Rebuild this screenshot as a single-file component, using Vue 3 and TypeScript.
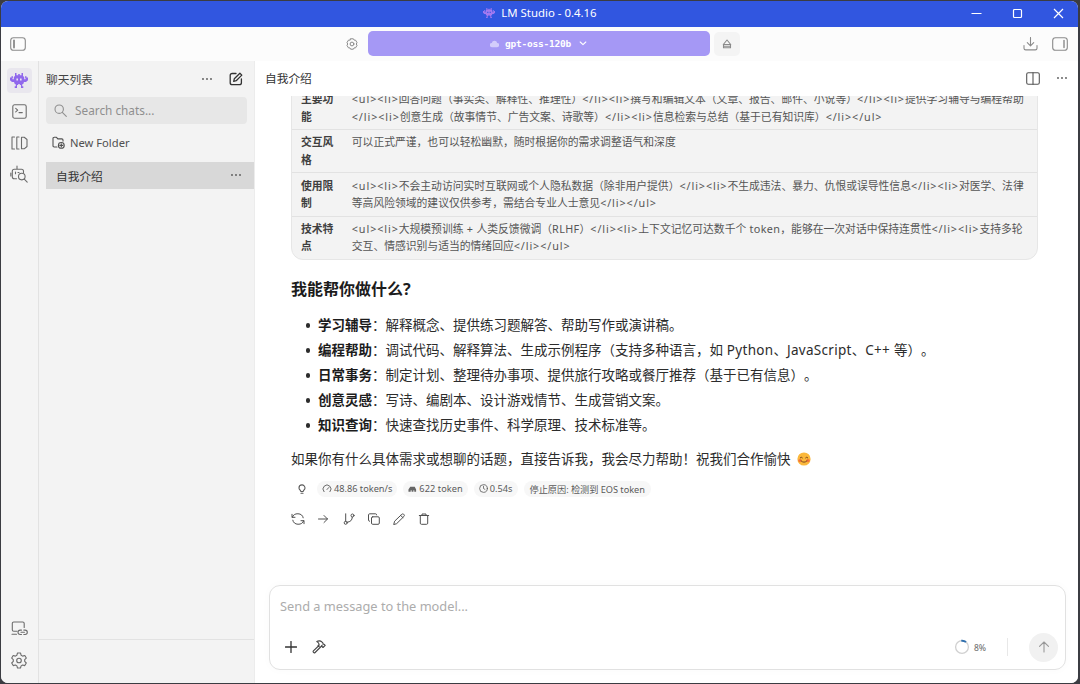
<script setup lang="ts">
interface Part { text: string; kind: string }
interface TableRow { head: string; lines: string[] }

const rows: TableRow[] = [
  {
    head: '主要功能',
    lines: [
      '<ul><li>回答问题（事实类、解释性、推理性）</li><li>撰写和编辑文本（文章、报告、邮件、小说等）</li><li>提供学习辅导与编程帮助',
      '</li><li>创意生成（故事情节、广告文案、诗歌等）</li><li>信息检索与总结（基于已有知识库）</li></ul>',
    ],
  },
  { head: '交互风格', lines: ['可以正式严谨，也可以轻松幽默，随时根据你的需求调整语气和深度'] },
  {
    head: '使用限制',
    lines: [
      '<ul><li>不会主动访问实时互联网或个人隐私数据（除非用户提供）</li><li>不生成违法、暴力、仇恨或误导性信息</li><li>对医学、法律',
      '等高风险领域的建议仅供参考，需结合专业人士意见</li></ul>',
    ],
  },
  {
    head: '技术特点',
    lines: [
      '<ul><li>大规模预训练 + 人类反馈微调（RLHF）</li><li>上下文记忆可达数千个 token，能够在一次对话中保持连贯性</li><li>支持多轮',
      '交互、情感识别与适当的情绪回应</li></ul>',
    ],
  },
]

const helps = [
  { title: '学习辅导', body: '解释概念、提供练习题解答、帮助写作或演讲稿。' },
  { title: '编程帮助', body: '调试代码、解释算法、生成示例程序（支持多种语言，如 Python、JavaScript、C++ 等）。' },
  { title: '日常事务', body: '制定计划、整理待办事项、提供旅行攻略或餐厅推荐（基于已有信息）。' },
  { title: '创意灵感', body: '写诗、编剧本、设计游戏情节、生成营销文案。' },
  { title: '知识查询', body: '快速查找历史事件、科学原理、技术标准等。' },
]

// Splits mixed text so that tags and Latin words can carry their own tracking.
function split(text: string): Part[] {
  return (text.match(/[\x20-\x7e]+|[^\x20-\x7e]+/g) ?? []).map((t) => ({
    text: t,
    kind: t.startsWith('<') ? 'tag' : /^[\x20-\x7e]/.test(t) ? 'latin' : 'han',
  }))
}
</script>

<template>
  <div class="window">
    <svg class="defs" width="0" height="0">
      <symbol id="invader" viewBox="0 0 18 15">
        <path fill="currentColor" fill-rule="evenodd" d="M5 0h1.500v2.200h1.700V1h1.600v1.200h1.700V0H13v2.800l1.200 1.500v1.900h1.300V4.800H15V3.300h1.500v1.200H18v2.700L16 9h-2.200v1.200l-1.600 1.300v1.700h1.100V15H11v-3h-1.200v-1H8.200v1H7v3H4.700v-1.800h1.100v-1.700l-1.600-1.300V9H2L0 7.200V4.500h1.500V3.300H3v1.500h-.5v1.400h1.300V4.300L5 2.800zM6.400 5.500v2H8v-2zm3.600 0v2h1.600v-2z" />
      </symbol>
    </svg>

    <header class="titlebar">
      <div class="title">
        <svg class="title-logo"><use href="#invader" /></svg>
        <span>LM Studio - 0.4.16</span>
      </div>
      <div class="win-controls">
        <svg width="11" height="11" viewBox="0 0 11 11"><path d="M.5 5.500h10" /></svg>
        <svg width="11" height="11" viewBox="0 0 11 11"><rect x="1.500" y="1.500" width="8" height="8" rx="1" /></svg>
        <svg width="11" height="11" viewBox="0 0 11 11"><path d="M1 1l9 9M10 1l-9 9" /></svg>
      </div>
    </header>

    <div class="toolbar">
      <svg class="i tb-left" viewBox="0 0 16 14"><rect x=".7" y=".7" width="14.600" height="12.600" rx="2.800" /><path d="M4 3.500v7" stroke-width="1.800" /></svg>
      <div class="model-group">
        <svg class="i gear" viewBox="0 0 12 12"><path d="M4.600.8h2.800l.7 1.300 1.500.1 1.400 2.400L10.300 6l.7 1.400-1.400 2.400-1.500.1-.7 1.300H4.600l-.7-1.300-1.500-.1L1 7.400 1.700 6 1 4.600l1.400-2.400 1.500-.1z" /><circle cx="6" cy="6" r="1.900" /></svg>
        <div class="model">
          <svg class="model-icon" viewBox="0 0 10 8"><path d="M5 .5a3 3 0 0 1 3 2.300A2.300 2.300 0 0 1 8 7.500H2a2.300 2.300 0 0 1 0-4.700A3 3 0 0 1 5 .5z" /></svg>
          <span>gpt-oss-120b</span>
          <svg class="i chev" viewBox="0 0 8 5"><path d="M1.200 1 4 3.700 6.800 1" /></svg>
        </div>
        <div class="eject"><svg class="i" width="10" height="10" viewBox="0 0 10 10"><path d="M5 1 8.700 5.500H1.300zM1.500 5.500v3.300h7V5.500M1.500 7.200h7" /></svg></div>
      </div>
      <div class="tb-right">
        <svg class="i" width="15" height="14" viewBox="0 0 15 14"><path d="M7.500.5v8M4.300 5.600l3.200 3.200 3.200-3.200M1 8.500v2.700c0 1 .7 1.700 1.700 1.700h9.600c1 0 1.700-.7 1.700-1.700V8.500" /></svg>
        <svg class="i" width="16" height="14" viewBox="0 0 16 14"><rect x=".7" y=".7" width="14.600" height="12.600" rx="2.800" /><path d="M12 3.500v7" stroke-width="1.400" /></svg>
      </div>
    </div>

    <div class="body">
      <nav class="rail">
        <div class="rail-btn active"><svg class="rail-logo"><use href="#invader" /></svg></div>
        <div class="rail-btn"><svg class="i" width="15" height="15" viewBox="0 0 15 15"><rect x=".8" y=".8" width="13.400" height="13.400" rx="1.800" /><path d="m3.700 4.300 2 1.800-2 1.800M7 8.600h3.300" /></svg></div>
        <div class="rail-btn"><svg class="i" width="17" height="14" viewBox="0 0 17 14"><path d="M3.500 1H1v12h2.500M8 1H5.800v12H8M10.500 1.200h2.700L16 3.500v7l-2.800 2.300h-2.700z" /></svg></div>
        <div class="rail-btn"><svg class="i" width="18" height="18" viewBox="0 0 18 18"><path d="M7 1v3M13.500 7.500V6.200c0-1.200-.8-2-2-2H4.300c-1.200 0-2 .8-2 2v5.600c0 1.200.8 2 2 2h2.200M.8 8v3M5.500 7v1.800M8 7.500h1" /><circle cx="11.800" cy="11.600" r="3.300" /><path d="m14.300 14.200 2.900 2.900" /></svg></div>
        <div class="rail-bottom">
          <div class="rail-btn"><svg class="i" width="17" height="15" viewBox="0 0 17 15"><path d="M6 10.300H2.800c-.9 0-1.500-.6-1.500-1.500V2.500C1.300 1.600 1.900 1 2.800 1h8.900c.9 0 1.500.6 1.500 1.500v4M1 13.300h4.500" /><path d="M10.500 13.500H9.200a2.200 2.200 0 0 1 0-4.400h1.300M12.800 9.100h1.300a2.200 2.200 0 0 1 0 4.400h-1.300M10 11.300h3.400" /></svg></div>
          <div class="rail-btn"><svg class="i" width="16" height="17" viewBox="0 0 16 17"><path d="M6.500 1h3l.6 2.200 1.500.9 2.200-.6 1.500 2.600-1.600 1.600v1.700l1.600 1.600-1.500 2.600-2.200-.6-1.500.9-.6 2.100h-3l-.6-2.100-1.500-.9-2.200.6L.7 11l1.600-1.600V7.700L.7 6.100l1.500-2.600 2.200.6 1.500-.9z" /><circle cx="8" cy="8.500" r="2.300" /></svg></div>
        </div>
      </nav>

      <aside class="sidebar">
        <div class="side-head">
          <span class="side-title">聊天列表</span>
          <svg class="dots" viewBox="0 0 10 2"><circle cx="1" cy="1" r=".9" /><circle cx="5" cy="1" r=".9" /><circle cx="9" cy="1" r=".9" /></svg>
          <svg class="i compose" viewBox="0 0 14 14"><path d="M7 1.500H3.200C2 1.500 1.200 2.300 1.200 3.500v7.200c0 1.200.8 2 2 2h7.200c1.200 0 2-.8 2-2V7" /><path d="M5.300 6.800 10.900 1.200l1.900 1.900-5.600 5.600-2.500.6z" /></svg>
        </div>
        <div class="search">
          <svg class="i" width="13" height="13" viewBox="0 0 13 13"><circle cx="5.200" cy="5.200" r="4.200" /><path d="m8.300 8.300 4 4" /></svg>
          <span>Search chats...</span>
        </div>
        <div class="folder">
          <svg class="i" width="13" height="13" viewBox="0 0 13 13"><path d="M5 11H2.200c-.7 0-1.200-.5-1.200-1.200V2.500c0-.7.500-1.200 1.200-1.200h2.300l1.300 1.600h4c.7 0 1.200.5 1.200 1.200v1" /><circle cx="9.300" cy="9.400" r="2.900" /><path d="M9.300 7.900v3M7.800 9.400h3" /></svg>
          <span>New Folder</span>
        </div>
        <div class="chat-item">
          <span>自我介绍</span>
          <svg class="dots" viewBox="0 0 10 2"><circle cx="1" cy="1" r=".9" /><circle cx="5" cy="1" r=".9" /><circle cx="9" cy="1" r=".9" /></svg>
        </div>
        <div class="side-foot"></div>
      </aside>

      <main class="main">
        <div class="chat-head">
          <span class="chat-title">自我介绍</span>
          <svg class="i split" viewBox="0 0 14 13"><rect x=".7" y=".7" width="12.600" height="11.600" rx="1.600" /><path d="M7 .7v11.600" /></svg>
          <svg class="dots" viewBox="0 0 10 2"><circle cx="1" cy="1" r=".9" /><circle cx="5" cy="1" r=".9" /><circle cx="9" cy="1" r=".9" /></svg>
        </div>

        <section class="scroll">
          <div class="table">
            <div v-for="row in rows" :key="row.head" class="tr">
              <div class="th">{{ row.head }}</div>
              <div class="td">
                <div v-for="line in row.lines" :key="line" class="line"><span v-for="(p, i) in split(line)" :key="i" :class="p.kind">{{ p.text }}</span></div>
              </div>
            </div>
          </div>

          <h3 class="heading">我能帮你做什么?</h3>
          <ul class="helps">
            <li v-for="h in helps" :key="h.title"><strong>{{ h.title }}</strong><span v-for="(p, i) in split('：' + h.body)" :key="i" :class="p.kind">{{ p.text }}</span></li>
          </ul>
          <p class="closing"><span>如果你有什么具体需求或想聊的话题，直接告诉我，我会尽力帮助！祝我们合作愉快</span>
            <svg class="smile" viewBox="0 0 14 14"><circle cx="7" cy="7" r="6.600" fill="#fbb83c" /><circle cx="3" cy="8.600" r="1.700" fill="#f5743c" /><circle cx="11" cy="8.600" r="1.700" fill="#f5743c" /><path d="M3.200 5.800q1.100-1.400 2.200 0M8.600 5.800q1.100-1.400 2.200 0M4 8.800q3 3 6 0" fill="none" stroke="#6b3a1a" stroke-width=".9" stroke-linecap="round" /></svg>
          </p>

          <div class="stats">
            <svg class="i bulb" viewBox="0 0 8 10"><path d="M2.800 7.500C2.600 6 1 5.700 1 3.900a3 3 0 0 1 6 0c0 1.800-1.600 2.100-1.800 3.600zM3 9.200h2" /></svg>
            <span class="chip s1"><svg class="i" width="10" height="9" viewBox="0 0 10 9"><path d="M2 7.700a4 4 0 1 1 6 0M5 5.500l1.800-2" /></svg>48.86 token/s</span>
            <span class="chip s2"><svg class="solid" width="9" height="8" viewBox="0 0 10 8"><path d="M2.500 1.500h5L9 4.500V7H7V5.500H6V7H4V5.500H3V7H.5V4.500z" /></svg>622 token</span>
            <span class="chip s3"><svg class="i" width="9" height="9" viewBox="0 0 10 10"><circle cx="5" cy="5" r="4.300" /><path d="M5 2.500V5l1.600 1" /></svg>0.54s</span>
            <span class="chip s4">停止原因: 检测到 EOS token</span>
          </div>

          <div class="actions">
            <svg class="i" viewBox="0 0 14 12"><path d="M1 1.300v3h3M1.300 4.300A5.600 4.900 0 0 1 12.200 4.800M13 10.700v-3h-3M12.700 7.700A5.600 4.900 0 0 1 1.800 7.200" /></svg>
            <svg class="i" viewBox="0 0 14 12"><path d="M2.500 6h9M8 2.500 11.500 6 8 9.500" /></svg>
            <svg class="i" viewBox="0 0 14 12"><path d="M3.700.8v7.500M10.300 4.200c0 3-2 4.800-5 5" /><circle cx="3.700" cy="9.800" r="1.500" /><circle cx="10.500" cy="2.500" r="1.500" /></svg>
            <svg class="i" viewBox="0 0 14 12"><rect x="4.500" y="3.800" width="7.800" height="7.500" rx="1.200" /><path d="M2.600 8.300c-.6 0-1.100-.5-1.100-1.100V1.900C1.500 1.300 2 .8 2.600.8h6c.6 0 1.100.5 1.100 1.100" /></svg>
            <svg class="i" viewBox="0 0 14 12"><path d="m1.800 11.200.8-3L9.800 1.300c1.300-1.200 3.500.8 2.200 2.100L4.900 10.400zM8.700 2.500l2.200 2.100" /></svg>
            <svg class="i" viewBox="0 0 14 12"><path d="M2.300 2.500h9.400M5 2.300V1h4v1.300M3.300 2.500v7.700c0 .7.400 1.100 1.100 1.100h5.200c.7 0 1.100-.4 1.100-1.100V2.500" /></svg>
          </div>
        </section>

        <div class="composer">
          <div class="placeholder">Send a message to the model...</div>
          <div class="tools">
            <svg class="i plus" viewBox="0 0 12 12"><path d="M6 .5v11M.5 6h11" /></svg>
            <svg class="i hammer" viewBox="0 0 14 14"><path d="m7 5.500-5.600 5.300c-1 1 .7 2.700 1.700 1.700L8.600 7M4.800 1.500c2-1 4-.6 5.300.7l.9.900v1.200h1.200l1 1-2.200 2.200-1-1V5.400L8 7.600 6 5.600l1.200-1.300C6.800 3 6 2.200 4.800 1.500z" /></svg>
            <svg class="ring" viewBox="0 0 16 16"><circle cx="8" cy="8" r="6.400" stroke="#d0d0d0" /><path d="M7.300 1.700A6.400 6.400 0 0 1 12 3" stroke="#2f6fae" stroke-width="2" /></svg>
            <span class="pct">8%</span>
            <span class="sep"></span>
            <div class="send"><svg class="i" width="12" height="12" viewBox="0 0 12 12"><path d="M6 11V1M1.500 5.300 6 1l4.500 4.300" /></svg></div>
          </div>
        </div>
      </main>
    </div>
  </div>
</template>

<style>
body { background: #3b3c42; overflow: hidden; }
</style>

<style scoped>
.window {
  box-sizing: border-box;
  width: 1077px;
  height: 682px;
  margin: 1px 0 0 1px;
  border-radius: 7px;
  overflow: hidden;
  background: #fff;
  display: flex;
  flex-direction: column;
  font-family: "Noto Sans", "Noto Sans CJK SC", sans-serif;
  color: #3c3c3c;
  text-spacing-trim: space-all;
  white-space: nowrap;
}
.defs { position: absolute; }
svg { flex: none; display: block; }
.i { fill: none; stroke: currentColor; stroke-width: 1.1; stroke-linecap: round; stroke-linejoin: round; }
.dots { width: 10px; height: 2px; fill: #555; }
.tag { letter-spacing: .9px; }
.latin { letter-spacing: .38px; }
.helps .latin { letter-spacing: .3px; }

.titlebar { height: 26px; flex: none; background: #3156e0; display: grid; grid-template-columns: 1fr auto 1fr; align-items: center; color: #fff; }
.title { grid-column: 2; display: flex; align-items: center; gap: 6px; font-size: 11.4px; line-height: 24px; height: 24px; margin: -2px 0 0 1px; }
.title-logo { width: 12px; height: 10px; color: #a47af0; }
.win-controls { display: flex; justify-content: flex-end; gap: 30px; padding: 0 14px 1px 0; }
.win-controls svg { fill: none; stroke: #fff; stroke-width: 1.2; }

.toolbar { height: 34px; flex: none; background: #fcfcfc; display: grid; grid-template-columns: 1fr auto 1fr; align-items: center; color: #8a8a8a; }
.tb-left { width: 16px; height: 14px; margin-left: 9px; }
.model-group { display: flex; align-items: center; margin: 0 0 1px 6px; }
.gear { width: 12px; height: 12px; stroke-width: 1; margin-right: 10px; }
.model { width: 342px; height: 25px; border-radius: 5px; background: #a598f5; display: flex; align-items: center; justify-content: center; color: #fff; font: bold 9.5px/20px "DejaVu Sans Mono", monospace; }
.model span { letter-spacing: -.2px; }
.model-icon { width: 9px; height: 8px; fill: #d3ccfb; margin-right: 6px; }
.chev { width: 8px; height: 5px; margin-left: 8px; }
.eject { width: 26px; height: 24px; margin-left: 4px; border-radius: 5px; background: #f4f4f4; display: grid; place-items: center; }
.tb-right { display: flex; justify-content: flex-end; gap: 14px; padding-right: 10px; }

.body { flex: 1; display: flex; min-height: 0; }
.rail { width: 38px; flex: none; background: #f4f4f4; border-right: 1px solid #e2e2e2; display: flex; flex-direction: column; align-items: center; padding: 7px 1px 0 0; box-sizing: border-box; color: #6c6c6c; gap: 6px; }
.rail-btn { width: 25px; height: 25px; border-radius: 4px; display: grid; place-items: center; }
.rail-btn.active { background: #e9e7ee; }
.rail-logo { width: 18px; height: 15px; color: #9068ec; }
.rail-bottom { margin-top: auto; padding-bottom: 10px; display: flex; flex-direction: column; gap: 7px; }

.sidebar { width: 216px; flex: none; background: #f3f3f3; border-right: 1px solid #ececec; box-sizing: border-box; display: flex; flex-direction: column; padding-left: 7px; }
.side-head { height: 35px; display: flex; align-items: center; padding-right: 11px; }
.side-title { font-size: 11.7px; flex: 1; color: #444; }
.compose { width: 14px; height: 14px; margin-left: 17px; color: #333; stroke-width: 1.3; }
.search { height: 27px; width: 201px; box-sizing: border-box; border-radius: 4px; background: #e7e7e7; display: flex; align-items: center; gap: 8px; padding: 0 0 1px 8px; color: #8f8f8f; font-size: 11.8px; margin-top: 1px; }
.folder { height: 38px; box-sizing: border-box; display: flex; align-items: center; gap: 5px; padding: 0 0 1px 6px; font-size: 11.2px; color: #505050; }
.chat-item { height: 27px; background: #d8d8d8; display: flex; align-items: center; justify-content: space-between; padding: 0 13px 1px 10px; box-sizing: border-box; font-size: 11.7px; color: #333; }
.side-foot { margin-top: auto; height: 43px; border-top: 1px solid #e2e2e2; margin-left: -7px; }

.main { flex: 1; min-width: 0; background: #fff; display: flex; flex-direction: column; }
.chat-head { height: 35px; flex: none; display: flex; align-items: center; padding: 0 11px 1px 10px; box-sizing: border-box; }
.chat-title { flex: 1; font-size: 11.7px; color: #333; margin-top: -1px; }
.split { width: 14px; height: 13px; margin-right: 17px; color: #555; }

.scroll { flex: 1; min-height: 0; overflow: hidden; padding: 0 40px 0 36px; display: flex; flex-direction: column; }
.table { flex: none; margin-top: -10px; border: 1px solid #e6e6e6; border-radius: 0 0 12px 12px; background: #f3f3f3; font-size: 10.8px; line-height: 17.200px; color: #555; }
.tr { display: flex; height: 43.200px; box-sizing: border-box; padding-top: 3.300px; border-bottom: 1px solid #e2e2e2; }
.tr:last-child { border-bottom: 0; height: 42.600px; }
.th { width: 33px; margin: 0 17.800px 0 9px; font-weight: 700; white-space: normal; word-break: break-all; color: #3f3f3f; }
.heading { margin: 16.600px 0 0; font-size: 16px; line-height: 24px; font-weight: 700; color: #1c1c1c; }
.helps { list-style: none; margin: 12px 0 0; padding: 0 0 0 27px; font-size: 13.5px; line-height: 25px; color: #2c2c2c; }
.helps li { height: 25px; }
.helps li::before { content: ""; float: left; width: 4.500px; height: 4.500px; margin: 10.500px 0 0 -12.500px; border-radius: 50%; background: #2c2c2c; }
.helps strong { color: #1c1c1c; }
.closing { margin: 9px 0 0; display: flex; align-items: center; gap: 6px; font-size: 13.5px; line-height: 25px; color: #2c2c2c; }
.smile { width: 14px; height: 14px; }
.stats { display: flex; align-items: center; height: 16px; margin-top: 9px; padding-left: 7px; font-size: 9.2px; color: #5a5a5a; }
.bulb { width: 8px; height: 10px; margin-right: 11px; }
.chip { height: 16px; border-radius: 8px; background: #f7f7f7; display: flex; align-items: center; gap: 2px; padding: 0 5px; box-sizing: border-box; margin-right: 6px; }
.s2 { letter-spacing: .08px; }
.s3 { padding: 0 5px; }
.s4 { letter-spacing: -.03px; padding: 0 6px; }
.chip .i { stroke-width: .9; }
.solid { fill: #666; }
.actions { display: flex; gap: 11.300px; margin-top: 16px; color: #505050; }
.actions svg { width: 14px; height: 12px; stroke-width: 1; }

.composer { flex: none; height: 85px; box-sizing: border-box; margin: 0 12px 13px 14px; border: 1px solid #e1e1e1; border-radius: 11px; display: flex; flex-direction: column; box-shadow: 0 0 10px rgba(0, 0, 0, .025); padding: 8px 7px 7px 10px; }
.placeholder { font-size: 12.8px; line-height: 24px; color: #acacac; }
.tools { margin-top: auto; display: flex; align-items: center; height: 30px; }
.plus { width: 12px; height: 12px; margin-left: 5px; color: #333; stroke-width: 1.3; }
.hammer { width: 14px; height: 14px; margin-left: 15px; color: #444; }
.ring { width: 16px; height: 16px; margin-left: auto; fill: none; stroke-width: 1.3; }
.pct { margin-left: 4px; font-size: 8.500px; font-weight: 500; color: #777; }
.sep { width: 1px; height: 18px; background: #e8e8e8; margin: 0 21px; }
.send { width: 29px; height: 29px; border-radius: 50%; background: #f1f1f1; display: grid; place-items: center; color: #999; }
</style>
